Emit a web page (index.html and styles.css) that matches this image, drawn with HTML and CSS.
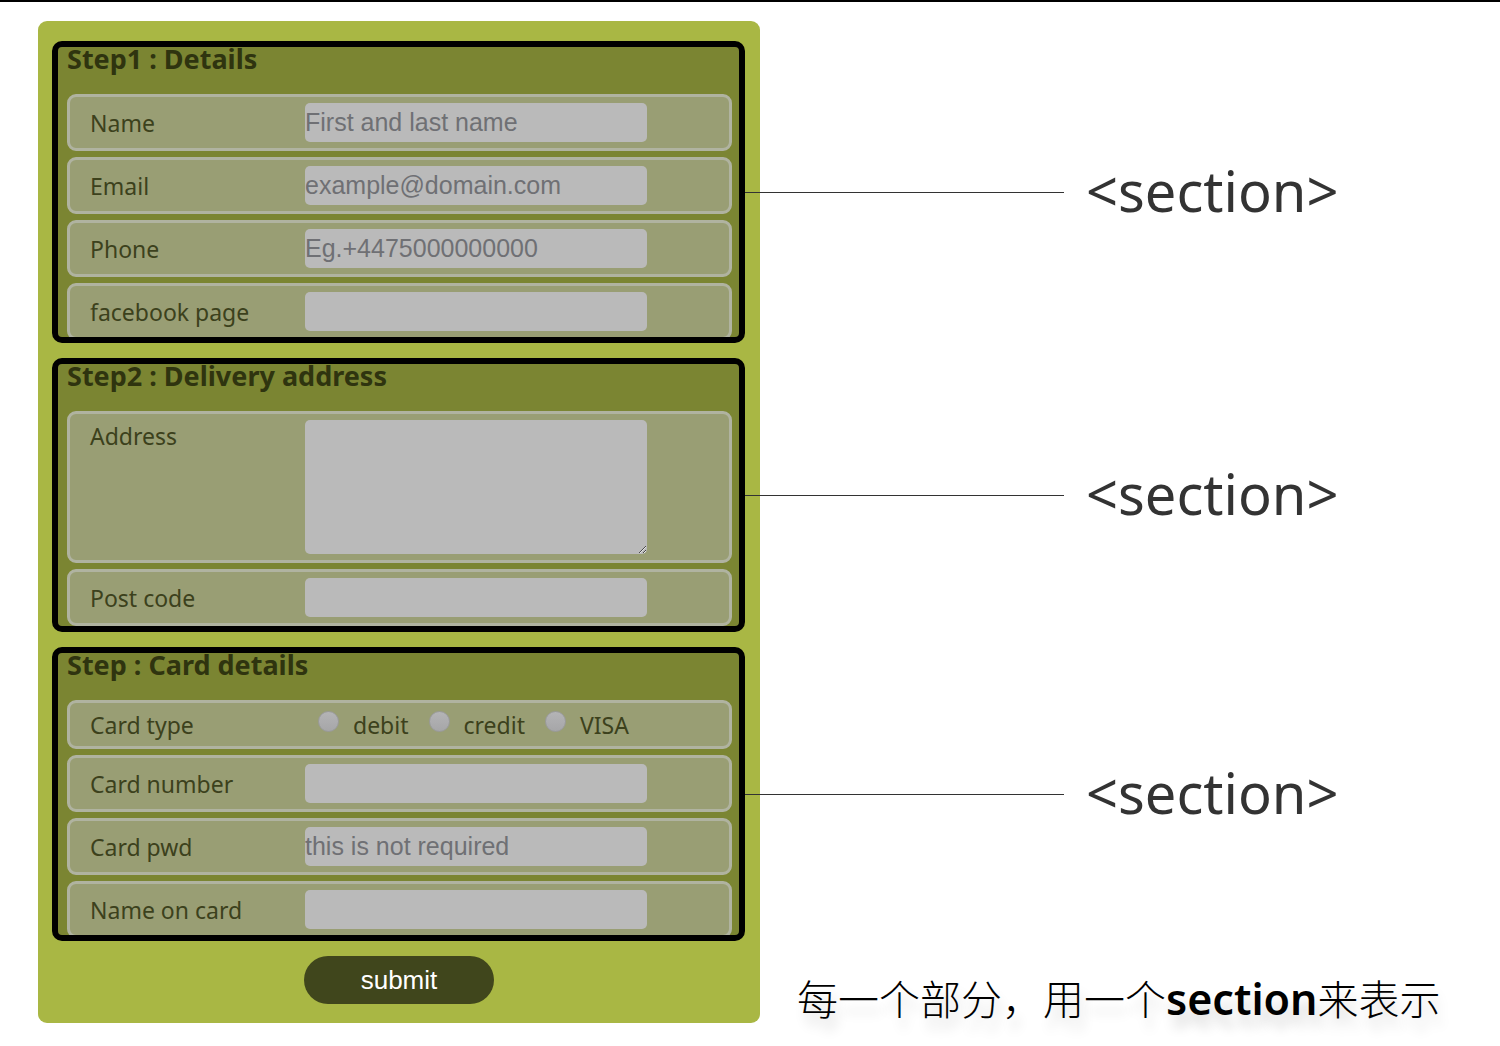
FILE: index.html
```html
<!DOCTYPE html>
<html lang="zh-CN">
<head>
<meta charset="utf-8">
<title>Section</title>
<link rel="stylesheet" href="styles.css">
</head>
<body>
<main class="slide">
  <form class="order">
    <section class="step">
      <div class="step-body">
        <h2 class="step-title">Step1 : Details</h2>
        <div class="rows">
          <div class="row"><label for="name">Name</label><input class="field" id="name" type="text" placeholder="First and last name"></div>
          <div class="row"><label for="email">Email</label><input class="field" id="email" type="email" placeholder="example@domain.com"></div>
          <div class="row"><label for="phone">Phone</label><input class="field" id="phone" type="tel" placeholder="Eg.+4475000000000"></div>
          <div class="row"><label for="facebook">facebook page</label><input class="field" id="facebook" type="text"></div>
        </div>
      </div>
      <p class="callout">&lt;section&gt;</p>
    </section>
    <section class="step">
      <div class="step-body step-body-full">
        <h2 class="step-title">Step2 : Delivery address</h2>
        <div class="rows">
          <div class="row row-top"><label for="address">Address</label><textarea class="field area" id="address"></textarea></div>
          <div class="row"><label for="postcode">Post code</label><input class="field" id="postcode" type="text"></div>
        </div>
      </div>
      <p class="callout">&lt;section&gt;</p>
    </section>
    <section class="step">
      <div class="step-body">
        <h2 class="step-title">Step : Card details</h2>
        <div class="rows">
          <div class="row row-short" role="radiogroup" aria-labelledby="card-type">
            <span class="caption" id="card-type">Card type</span>
            <div class="choices">
              <label class="choice"><input class="radio" type="radio" name="card">debit</label>
              <label class="choice"><input class="radio" type="radio" name="card">credit</label>
              <label class="choice"><input class="radio" type="radio" name="card">VISA</label>
            </div>
          </div>
          <div class="row"><label for="number">Card number</label><input class="field" id="number" type="text"></div>
          <div class="row"><label for="pwd">Card pwd</label><input class="field" id="pwd" type="password" placeholder="this is not required"></div>
          <div class="row"><label for="holder">Name on card</label><input class="field" id="holder" type="text"></div>
        </div>
      </div>
      <p class="callout">&lt;section&gt;</p>
    </section>
    <button class="submit" type="submit">submit</button>
  </form>
  <p class="subtitle">每一个部分，用一个<strong>section</strong>来表示</p>
</main>
</body>
</html>
```
FILE: styles.css
```css
* { box-sizing: border-box; }

body {
  margin: 0;
  border-top: 2px solid #000;
  background: #fff;
  color: #3c411c;
  font-family: "Noto Sans", "Noto Sans CJK SC", sans-serif;
}

.slide {
  display: grid;
  grid-template-columns: 722fr 740fr;
  padding: 19px 0 23px 38px;
}

.order {
  display: flex;
  flex-direction: column;
  gap: 15px;
  padding: 20px 15px 19px 14px;
  border-radius: 9px;
  background: #a9b744;
}

.step { position: relative; }

.step-body {
  overflow: hidden;
  padding: 0 7px 0 9px;
  border: 6px solid #000;
  border-radius: 10px;
  background: #7b8532;
}

.step-title {
  height: 47px;
  margin: 0;
  color: #2f340f;
  font-size: 27px;
  line-height: 24px;
}

.rows {
  display: flex;
  flex-direction: column;
  gap: 6px;
  margin-bottom: -3px;
}

.step-body-full .rows { margin-bottom: 0; }

.row {
  display: flex;
  align-items: center;
  padding: 6px 20px;
  border: 3px solid #b0b3a0;
  border-radius: 9px;
  background: #999e74;
  font-size: 23px;
  line-height: 32px;
}

.row-top { align-items: flex-start; }

.row-short { height: 49px; }

.row > label,
.caption { flex: 0 0 215px; }

.field {
  width: 342px;
  height: 39px;
  padding: 0;
  border: 0;
  border-radius: 5px;
  background: #bababa;
  color: #333;
  font: 25px "Liberation Sans", Arial, sans-serif;
}

.field::placeholder {
  color: #6f7074;
  opacity: 1;
}

.area {
  height: 134px;
  resize: both;
}

.choices {
  display: flex;
  gap: 20px;
  padding-left: 13px;
}

.choice {
  display: flex;
  align-items: center;
  gap: 14px;
}

.radio {
  appearance: none;
  width: 21px;
  height: 21px;
  margin: 0 0 6px;
  border: 1px solid #999a9c;
  border-radius: 50%;
  background: linear-gradient(#b4b4b6, #a6a6a8);
}

.radio:checked { box-shadow: inset 0 0 0 5px #a6a6a8, inset 0 0 0 10px #333; }

.submit {
  width: 190px;
  height: 48px;
  margin-left: 252px;
  padding: 0;
  border: 0;
  border-radius: 24px;
  background: #40461c;
  color: #fff;
  font: 26px "Liberation Sans", Arial, sans-serif;
}

/* leader line and tag name, drawn from the edge of each step */
.callout {
  position: absolute;
  top: 50%;
  left: 100%;
  display: flex;
  align-items: center;
  gap: 22px;
  margin: 0;
  padding-bottom: 4px;
  transform: translateY(-50%);
  color: #333;
  font-size: 56px;
  line-height: 64px;
}

.callout::before {
  content: "";
  width: 319px;
  height: 1px;
  margin-top: 4px;
  background: #333;
}

.subtitle {
  align-self: end;
  margin: 0;
  padding-left: 37px;
  color: #000;
  font-family: "Noto Sans CJK SC", sans-serif;
  font-size: 41px;
  font-weight: 300;
  line-height: 48px;
  text-shadow: 4px 12px 12px rgba(0, 0, 0, 0.15);
}

.subtitle strong {
  font-family: "Noto Sans", sans-serif;
  font-size: 43px;
  font-weight: 600;
}
```
